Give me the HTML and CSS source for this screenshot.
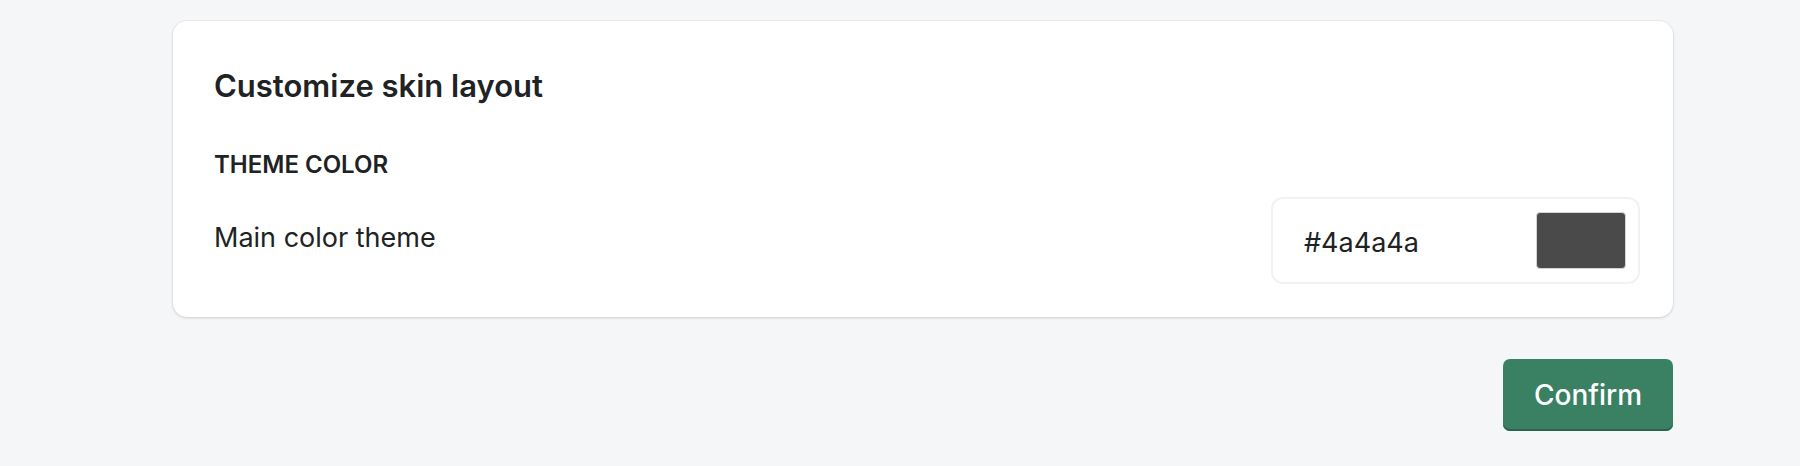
FILE: index.html
```html
<!DOCTYPE html>
<html>
<head>
    <title>Customize skin layout</title>
    <link rel="stylesheet" href="styles.css">
</head>
<body>
    <div class="page">
        <div class="card">
            <h2 class="card-title">Customize skin layout</h2>
            <h3 class="section-title">THEME COLOR</h3>
            <div class="setting-row">
                <span class="setting-label">Main color theme</span>
                <div class="color-field">
                    <span class="color-value">#4a4a4a</span>
                    <span class="color-swatch"></span>
                </div>
            </div>
        </div>
        <div class="actions">
            <button class="confirm-button">Confirm</button>
        </div>
    </div>
</body>
</html>
```

FILE: styles.css
```css
body {
    margin: 0;
    background: #f5f6f8;
    font-family: Inter, "Noto Sans", sans-serif;
    color: #202223;
}
.page {
    width: 1500px;
    margin-left: 173px;
    padding-top: 21px;
}
.card {
    background: white;
    border-radius: 14px;
    padding: 43px 33px 33px 41px;
    box-shadow: 0 0 0 1px rgba(63,63,68,0.04), 0 1px 3px rgba(63,63,68,0.18);
}
.card-title {
    margin: 0;
    font-size: 31px;
    font-weight: 600;
    line-height: 44px;
}
.section-title {
    margin: 41px 0 0 0;
    font-size: 24px;
    font-weight: 600;
    line-height: 32px;
}
.setting-row {
    display: flex;
    justify-content: space-between;
    align-items: center;
    margin-top: 16px;
}
.setting-label {
    font-size: 27px;
    margin-bottom: 6px;
}
.color-field {
    display: flex;
    justify-content: space-between;
    align-items: center;
    box-sizing: border-box;
    width: 369px;
    height: 87px;
    padding: 0 12px 0 31px;
    border: 2px solid #f1f2f3;
    border-radius: 12px;
}
.color-value {
    font-size: 27px;
    margin-top: 4px;
}
.color-swatch {
    box-sizing: border-box;
    width: 90px;
    height: 57px;
    background: #4a4a4a;
    border: 1px solid #d4d5d7;
    border-radius: 4px;
}
.actions {
    display: flex;
    justify-content: flex-end;
    margin-top: 42px;
}
.confirm-button {
    width: 170px;
    height: 72px;
    border: none;
    border-radius: 7px;
    background: #3a8063;
    box-shadow: inset 0 -2px 0 #2c6450;
    color: white;
    font-family: Inter, "Noto Sans", sans-serif;
    font-size: 28px;
    font-weight: 500;
    cursor: pointer;
}
```
